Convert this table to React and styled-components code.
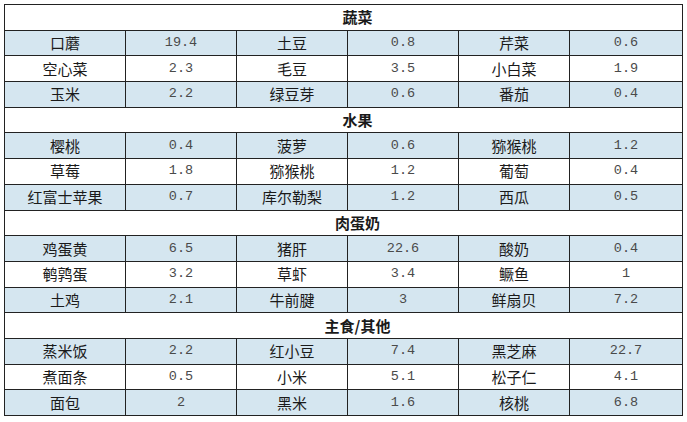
import React from 'react';
import styled, { createGlobalStyle } from 'styled-components';

const GlobalStyle = createGlobalStyle`
  body {
    margin: 0;
    background: #ffffff;
    font-family: "Noto Sans CJK SC", "Noto Sans", sans-serif;
  }
`;

export const Page = styled.div`
  padding: 4px 0 0 4px;
`;

export const Tabela = styled.table`
  border-collapse: collapse;
  table-layout: fixed;
  width: 678px;
  color: #1a1a1a;
`;

export const Coluna = styled.col`
  width: ${props => props.$largura}px;
`;

export const Linha = styled.tr`
  height: 25.7px;
  background: ${props => props.$azul ? '#d5e6f0' : '#ffffff'};
`;

export const Titulo = styled.td`
  border: 1px solid #222;
  padding: 0 0 0 28px;
  text-align: center;
  font-weight: bold;
  font-size: 15px;
  line-height: 20px;
  background: #ffffff;
`;

export const Nome = styled.td`
  border: 1px solid #222;
  padding: 0;
  text-align: center;
  font-size: 15px;
  line-height: 20px;
`;

export const Valor = styled.td`
  border: 1px solid #222;
  padding: 0;
  text-align: center;
  font-family: "Liberation Mono", monospace;
  font-size: 13.5px;
  line-height: 20px;
  color: #4a4a4a;
`;

const larguras = [121, 111, 111, 111, 111, 113];

const secoes = [
  {
    titulo: '蔬菜',
    linhas: [
      ['口蘑', '19.4', '土豆', '0.8', '芹菜', '0.6'],
      ['空心菜', '2.3', '毛豆', '3.5', '小白菜', '1.9'],
      ['玉米', '2.2', '绿豆芽', '0.6', '番茄', '0.4'],
    ],
  },
  {
    titulo: '水果',
    linhas: [
      ['樱桃', '0.4', '菠萝', '0.6', '猕猴桃', '1.2'],
      ['草莓', '1.8', '猕猴桃', '1.2', '葡萄', '0.4'],
      ['红富士苹果', '0.7', '库尔勒梨', '1.2', '西瓜', '0.5'],
    ],
  },
  {
    titulo: '肉蛋奶',
    linhas: [
      ['鸡蛋黄', '6.5', '猪肝', '22.6', '酸奶', '0.4'],
      ['鹌鹑蛋', '3.2', '草虾', '3.4', '鳜鱼', '1'],
      ['土鸡', '2.1', '牛前腱', '3', '鲜扇贝', '7.2'],
    ],
  },
  {
    titulo: '主食/其他',
    linhas: [
      ['蒸米饭', '2.2', '红小豆', '7.4', '黑芝麻', '22.7'],
      ['煮面条', '0.5', '小米', '5.1', '松子仁', '4.1'],
      ['面包', '2', '黑米', '1.6', '核桃', '6.8'],
    ],
  },
];

function App() {
  return (
    <Page>
      <GlobalStyle />
      <Tabela>
        <colgroup>
          {larguras.map((l, i) => <Coluna key={i} $largura={l} />)}
        </colgroup>
        <tbody>
          {secoes.map(secao => (
            <React.Fragment key={secao.titulo}>
              <Linha>
                <Titulo colSpan={6}>{secao.titulo}</Titulo>
              </Linha>
              {secao.linhas.map((linha, i) => (
                <Linha key={i} $azul={i !== 1}>
                  {linha.map((celula, j) =>
                    j % 2 === 0
                      ? <Nome key={j}>{celula}</Nome>
                      : <Valor key={j}>{celula}</Valor>
                  )}
                </Linha>
              ))}
            </React.Fragment>
          ))}
        </tbody>
      </Tabela>
    </Page>
  );
}

export default App;
